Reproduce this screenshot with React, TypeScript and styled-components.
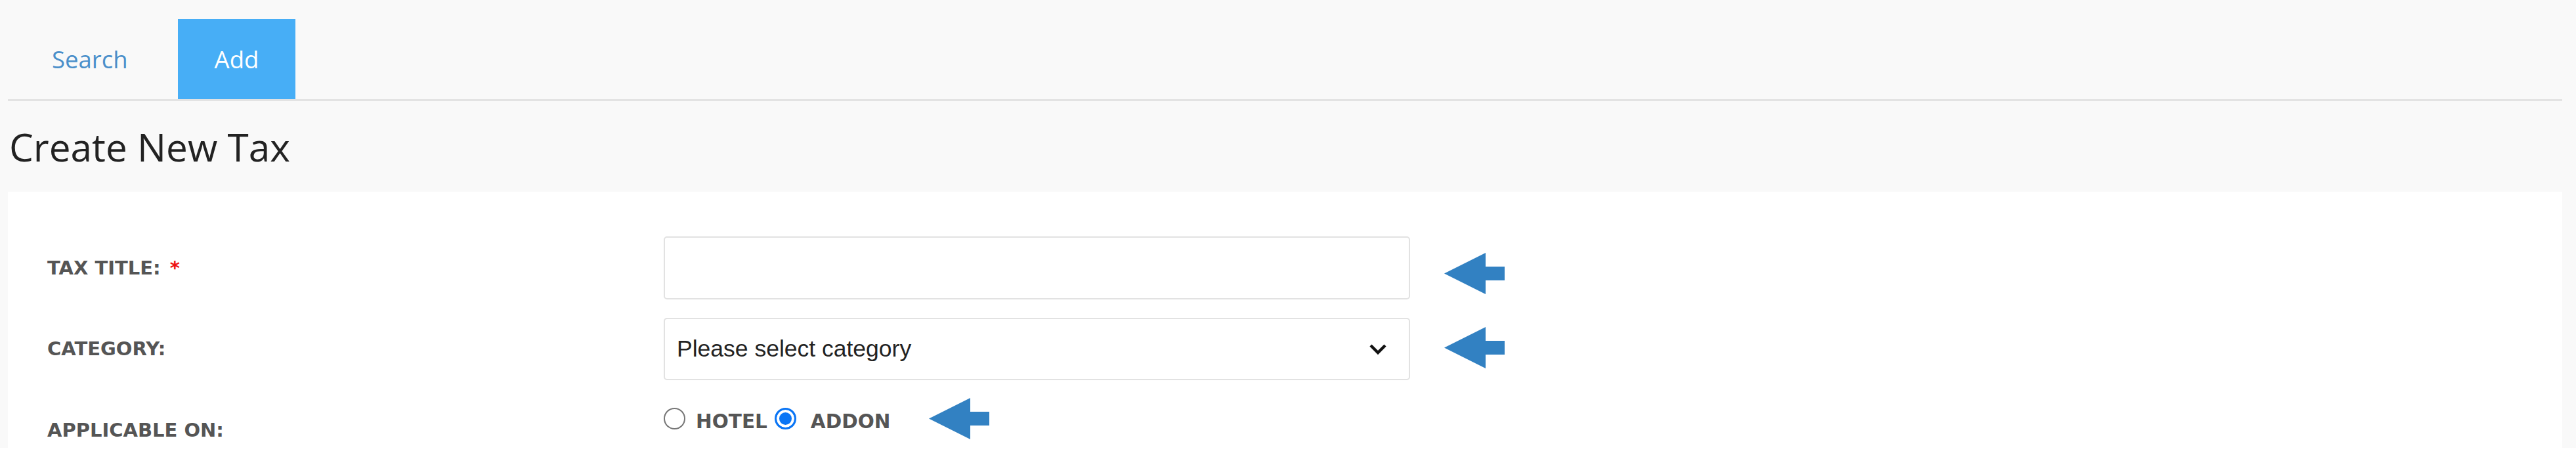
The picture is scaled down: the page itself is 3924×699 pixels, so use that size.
import styled, { createGlobalStyle } from "styled-components";

const GlobalStyle = createGlobalStyle`
  html, body {
    margin: 0;
    padding: 0;
    background: #ffffff;
  }
  * {
    box-sizing: border-box;
  }
`;

const Page = styled.div`
  display: flex;
  flex-direction: column;
  height: 682px;
  overflow: hidden;
  padding: 0 21px 0 12px;
  background: #f9f9f9;
  font-family: "Open Sans", "Noto Sans", sans-serif;
`;

const TabBar = styled.div`
  display: flex;
  gap: 20px;
  padding: 29px 0 0 11px;
  border-bottom: 3px solid #e3e3e3;
`;

const Tab = styled.div<{ $active?: boolean }>`
  display: flex;
  align-items: center;
  height: 122px;
  padding: 0 56px;
  font-size: 36.5px;
  color: ${(p) => (p.$active ? "#ffffff" : "#4a8fca")};
  background: ${(p) => (p.$active ? "#47aef6" : "transparent")};
`;

const Title = styled.h1`
  margin: 40px 0 39px 2px;
  font-size: 58.5px;
  font-weight: 400;
  line-height: 1;
  color: #222222;
`;

const Card = styled.div`
  flex: 1;
  padding: 68px 0 0 60px;
  background: #ffffff;
`;

const FormRow = styled.div<{ $gap?: number; $top?: boolean }>`
  display: grid;
  grid-template-columns: 939px 1137px auto;
  align-items: ${(p) => (p.$top ? "start" : "center")};
  margin-top: ${(p) => p.$gap ?? 0}px;
`;

const Label = styled.label<{ $drop?: number }>`
  font-family: "DejaVu Sans", Verdana, sans-serif;
  font-size: 29px;
  font-weight: 700;
  color: #555555;
  margin-top: ${(p) => p.$drop ?? 0}px;
`;

const Required = styled.span`
  margin-left: 14px;
  color: #ee1111;
`;

const TextInput = styled.input`
  height: 96px;
  width: 100%;
  border: 2px solid #e2e2e2;
  border-radius: 5px;
  background: #ffffff;
  outline: none;
`;

const SelectWrap = styled.div`
  position: relative;
  height: 95px;
`;

const Select = styled.select`
  appearance: none;
  width: 100%;
  height: 100%;
  padding: 0 60px 0 18px;
  border: 2px solid #e2e2e2;
  border-radius: 5px;
  background: #ffffff;
  font-family: "Liberation Sans", Arial, sans-serif;
  font-size: 35.5px;
  color: #222222;
  outline: none;
`;

const Chevron = styled.svg`
  position: absolute;
  right: 35px;
  top: 39px;
  pointer-events: none;
`;

const ArrowMark = styled.svg<{ $gap: number; $shift: number }>`
  display: block;
  margin-left: ${(p) => p.$gap}px;
  margin-top: ${(p) => p.$shift * 2}px;
`;

const RadioGroup = styled.div`
  display: flex;
  align-items: center;
  grid-column: 2 / 4;
`;

const RadioOption = styled.label<{ $gap: number }>`
  display: flex;
  align-items: center;
  gap: ${(p) => p.$gap}px;
  margin-right: 11px;
  font-family: "DejaVu Sans", Verdana, sans-serif;
  font-size: 29.5px;
  font-weight: 700;
  color: #555555;
`;

const RadioText = styled.span`
  margin-top: 10px;
`;

const Radio = styled.input`
  appearance: none;
  margin: 0;
  width: 33px;
  height: 33px;
  border-radius: 50%;
  border: 2px solid #767676;
  background: #ffffff;

  &:checked {
    border: 3px solid #0a75f5;
    background: #0a75f5;
    box-shadow: inset 0 0 0 4px #ffffff;
  }
`;

const Arrow = ({ gap = 52, shift = 0 }: { gap?: number; shift?: number }) => (
  <ArrowMark $gap={gap} $shift={shift} width={92} height={63} viewBox="0 0 92 63">
    <polygon fill="#3281c2" points="0,31.5 63,0 63,21 92,21 92,42 63,42 63,63" />
  </ArrowMark>
);

export default function App() {
  return (
    <>
      <GlobalStyle />
      <Page>
        <TabBar>
          <Tab>Search</Tab>
          <Tab $active>Add</Tab>
        </TabBar>
        <Title>Create New Tax</Title>
        <Card>
          <FormRow>
            <Label>
              TAX TITLE:<Required>*</Required>
            </Label>
            <TextInput type="text" />
            <Arrow shift={9} />
          </FormRow>
          <FormRow $gap={28}>
            <Label>CATEGORY:</Label>
            <SelectWrap>
              <Select defaultValue="">
                <option value="">Please select category</option>
              </Select>
              <Chevron width={28} height={18} viewBox="0 0 28 18">
                <polyline
                  points="3,3 14,14 25,3"
                  fill="none"
                  stroke="#111111"
                  strokeWidth={4.5}
                />
              </Chevron>
            </SelectWrap>
            <Arrow shift={-2} />
          </FormRow>
          <FormRow $gap={27} $top>
            <Label $drop={32}>APPLICABLE ON:</Label>
            <RadioGroup>
              <RadioOption $gap={16}>
                <Radio type="radio" name="applicable" />
                <RadioText>HOTEL</RadioText>
              </RadioOption>
              <RadioOption $gap={22}>
                <Radio type="radio" name="applicable" defaultChecked />
                <RadioText>ADDON</RadioText>
              </RadioOption>
              <Arrow gap={48} />
            </RadioGroup>
          </FormRow>
        </Card>
      </Page>
    </>
  );
}
